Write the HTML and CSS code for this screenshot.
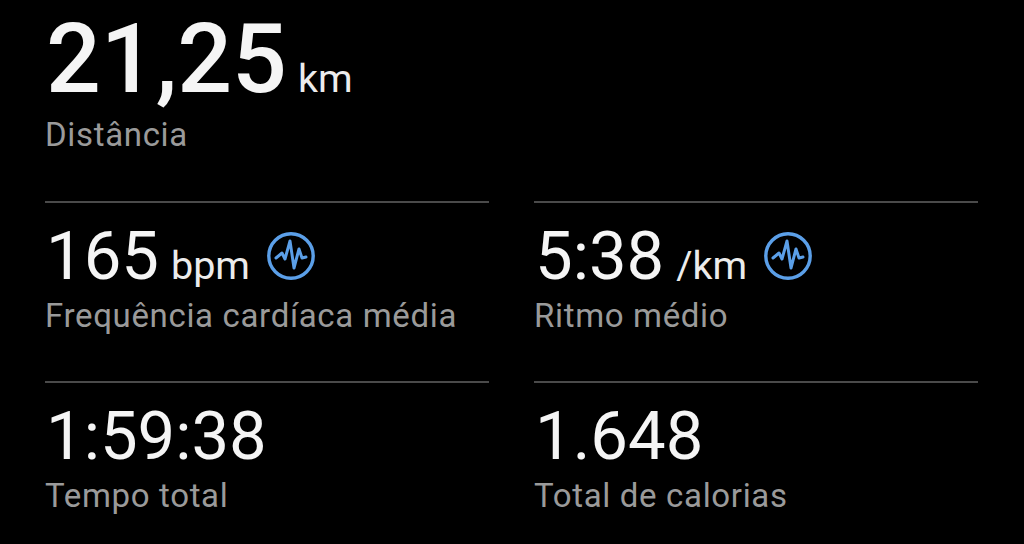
FILE: index.html
```html
<!DOCTYPE html>
<html lang="en">

<head>
    <meta charset="UTF-8">
    <title>Resumo da corrida</title>
    <link rel="stylesheet" href="styles.css">
</head>

<body>
    <svg class="defs" width="0" height="0">
        <symbol id="fc" viewBox="0 0 48 48">
            <circle cx="24" cy="24" r="22.2" fill="none" stroke="#5b9fe8" stroke-width="3.4" />
            <path d="M9 26 L15 21 L18 27 L23 9 L27 36 L32 17 L35 26 L39 25" fill="none" stroke="#5b9fe8" stroke-width="3" stroke-linejoin="round" stroke-linecap="round" />
        </symbol>
    </svg>

    <div class="topo">
        <div class="valor valorGrande">21,25<span class="unidade unidadeGrande">km</span></div>
        <div class="nome">Distância</div>
    </div>

    <div class="griglia">
        <div class="cella">
            <div class="valor">165<span class="unidade">bpm</span><svg class="icona"><use href="#fc" /></svg></div>
            <div class="nome">Frequência cardíaca média</div>
        </div>
        <div class="cella">
            <div class="valor">5:38<span class="unidade">/km</span><svg class="icona"><use href="#fc" /></svg></div>
            <div class="nome">Ritmo médio</div>
        </div>
        <div class="cella">
            <div class="valor">1:59:38</div>
            <div class="nome">Tempo total</div>
        </div>
        <div class="cella">
            <div class="valor">1.648</div>
            <div class="nome">Total de calorias</div>
        </div>
    </div>
</body>

</html>
```

FILE: styles.css
```css
body {
    margin: 0;
    height: 544px;
    overflow: hidden;
    background-color: black;
    font-family: Roboto, "Liberation Sans", sans-serif;
    color: #f5f5f5;
}

.defs {
    display: block;
}

.topo {
    height: 201px;
    padding-left: 46px;
    box-sizing: border-box;
}

.griglia {
    display: grid;
    grid-template-columns: 444px 444px;
    grid-auto-rows: 180px;
    column-gap: 45px;
    padding-left: 45px;
}

.cella {
    border-top: 2px solid #4a4a4a;
    padding-left: 1px;
}

.valor {
    display: flex;
    align-items: baseline;
    height: 82px;
    font-size: 67px;
    line-height: 82px;
    margin-top: 12px;
}

.valorGrande {
    height: 113px;
    font-size: 96.5px;
    font-weight: 500;
    line-height: 113px;
    margin-top: 0;
    padding-top: 3px;
}

.unidade {
    font-size: 39.5px;
    margin-left: 12px;
    color: #ececec;
}

.unidadeGrande {
    margin-left: 11px;
    font-weight: 400;
}

.nome {
    margin-left: -1px;
    font-size: 33px;
    line-height: 38px;
    color: #9a9a9a;
    letter-spacing: 0.66px;
}

.icona {
    width: 48px;
    height: 48px;
    margin-left: 17px;
    align-self: center;
}
```
